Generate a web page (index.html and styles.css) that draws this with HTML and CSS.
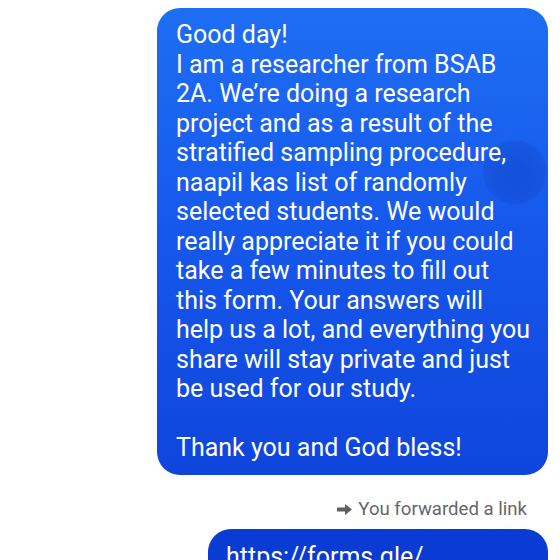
FILE: index.html
```html
<!DOCTYPE html>
<html>
<head>
<meta charset="utf-8">
<link rel="stylesheet" href="styles.css">
</head>
<body>
<div class="chat">
  <div class="bubble main">
    <div class="msg">Good day!<br>I am a researcher from BSAB<br>2A. We’re doing a research<br>project and as a result of the<br>stratified sampling procedure,<br>naapil kas list of randomly<br>selected students. We would<br>really appreciate it if you could<br>take a few minutes to fill out<br>this form. Your answers will<br>help us a lot, and everything you<br>share will stay private and just<br>be used for our study.<br><br>Thank you and God bless!</div>
    <div class="touch"></div>
  </div>
  <div class="forward">
    <svg class="fwd-icon" width="15" height="11" viewBox="0 0 15 11"><path d="M0 3.5 H8 V0 L15 5.5 L8 11 V7.5 H0 Z" fill="#5f6063"/></svg>
    <span>You forwarded a link</span>
  </div>
  <div class="bubble link">
    <div class="msg">https://forms.gle/</div>
  </div>
</div>
</body>
</html>
```
FILE: styles.css
```css
html, body {
  margin: 0;
  padding: 0;
  background: #ffffff;
  overflow: hidden;
  height: 560px;
}
.chat {
  display: flex;
  flex-direction: column;
  align-items: flex-end;
  padding: 8px 12px 0 0;
  font-family: Roboto, "Noto Sans", sans-serif;
}
.bubble {
  position: relative;
  border-radius: 23px;
  color: #ffffff;
  font-size: 25px;
  line-height: 29.5px;
  box-sizing: border-box;
  overflow: hidden;
}
.main {
  width: 391px;
  padding: 12px 6px 12px 19px;
  background: linear-gradient(180deg, #1e6ef4 0%, #1759ec 45%, #0f45dc 100%);
}
.msg {
  white-space: nowrap;
  position: relative;
  z-index: 1;
}
.touch {
  position: absolute;
  left: 326px;
  top: 132px;
  width: 64px;
  height: 64px;
  border-radius: 50%;
  background: radial-gradient(circle, rgba(10, 50, 170, 0.3) 0%, rgba(10, 50, 170, 0.22) 55%, rgba(10, 50, 170, 0) 100%);
}
.forward {
  display: flex;
  align-items: center;
  gap: 6px;
  margin: 23px 21px 0 0;
  font-size: 18.6px;
  line-height: 22px;
  color: #65676b;
}
.fwd-icon {
  display: block;
  margin-top: 1px;
}
.link {
  width: 340px;
  margin-top: 9px;
  padding: 13px 18px 20px 18px;
  background: #0a3bd2;
}
```
